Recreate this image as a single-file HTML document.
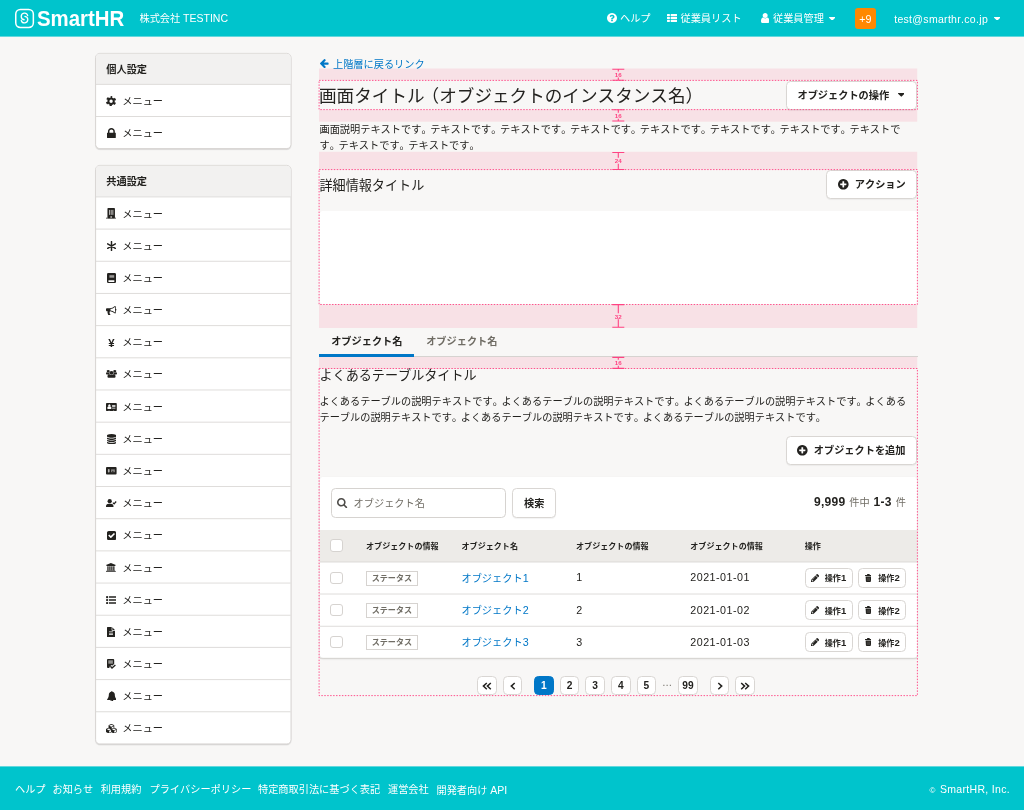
<!DOCTYPE html>
<html lang="ja"><head><meta charset="utf-8"><title>SmartHR</title><style>
*{box-sizing:border-box;margin:0;padding:0}
html,body{width:1024px;height:810px;overflow:hidden}
body{position:relative;background:#f8f7f6;color:#23221f;font-family:"Liberation Sans","Noto Sans CJK JP",sans-serif;font-size:10.2px}
*{font-kerning:none}
.pt{letter-spacing:-.14em}
.po{margin-left:-.17em}
.l{font-size:1.03em}
.n{letter-spacing:.045em;font-size:1.05em}
#root{position:absolute;left:0;top:0;width:1024px;height:810px;will-change:transform;filter:blur(.35px)}
div,nav,header,footer,svg.ic,.t{position:absolute}
a{text-decoration:none}
.hd{left:-12px;top:-12px;width:1048px;height:49px;background:linear-gradient(#00c4cc 48px,#63d8dd 48px)}
.hd>*{margin:12px 0 0 12px}
.ft>*{margin-left:12px}
.ft{left:-12px;top:766px;width:1048px;height:56px;background:linear-gradient(#63d8dd 1px,#00c4cc 1px)}
.t{white-space:nowrap}
.w{color:#fff}
.logo{color:#fff;font-weight:700;font-size:22.3px;letter-spacing:0;transform:scaleX(.915);transform-origin:0 50%}
.em .l{letter-spacing:.31px}
.badge{background:#ff8800;color:#fff;border-radius:3px;text-align:center;line-height:22.4px;font-size:10.2px}
.ov{position:absolute;left:0;top:0;width:1024px;height:810px;pointer-events:none}
.ov text{font-family:"Liberation Sans",sans-serif}
.lk{color:#0077c7}
.yen{font-size:11.4px;font-weight:700}
.h1{font-size:17.6px;font-weight:400}
.h2{font-size:13.1px;font-weight:400}
.b{font-weight:700}
.gr{color:#706d65}
.btn{background:#fff;border:1px solid #d9d6d3;border-radius:4.5px;box-shadow:0 1px 1px rgba(3,3,2,.05)}
.wh{background:#fff;border-radius:3px}
.tb{box-shadow:0 1px 2px rgba(3,3,2,.16)}
.inp{background:#fff;border:1px solid #d6d3d0;border-radius:4.5px}
.th{background:#edebe8}
.thx{font-size:8.07px;font-weight:700}
.cb{background:#fff;border:1px solid #d6d3d0;border-radius:3px}
.st{border:1px solid #d6d3d0;background:#fff;font-size:8.07px;font-weight:700;color:#706d65;text-align:center;line-height:13px}
.bs{font-size:8.07px;font-weight:700}
.bs .n{font-size:1.18em;letter-spacing:0}
.sm{box-shadow:none}
.num{font-weight:700}
.num .n{font-size:1.18em;letter-spacing:.025em}
.cnt{word-spacing:1px}
.cnt{font-size:10.2px}
.pg{background:#fff;border:1px solid #d9d6d3;border-radius:4.5px;text-align:center;line-height:18.6px;font-size:10.2px;font-weight:700;letter-spacing:0}
.pg.on{background:#0077c7;border-color:#0077c7;color:#fff}
.el{color:#706d65}
small{font-size:8px;letter-spacing:0;margin-right:1.6px}
.cp .l{letter-spacing:.33px}
</style></head><body><div id="root">
<header class="hd">
<svg class="ic" style="left:14px;top:7.5px;width:21px;height:21px" viewBox="0 0 21 21"><rect x="1.75" y="1.45" width="17.6" height="18" rx="4.6" fill="none" stroke="#fff" stroke-width="1.5"/><path d="M13.7 7.6A3.3 3.3 0 1 0 10.1 11.75M7.3 12.5A3.3 3.3 0 1 0 10.9 8.35" fill="none" stroke="#fff" stroke-width="1.3" stroke-linecap="round"/></svg>
<div class="t logo" style="left:37.1px;top:6.8px;height:24px;line-height:24px;">SmartHR</div>
<div class="t w" style="left:139.5px;top:7.2px;height:22px;line-height:22px;">株式会社 <span class="l">TESTINC</span></div>
<svg class="ic" style="left:606.70px;top:13.40px;width:10.00px;height:10.00px" viewBox="0 -1408 1536 1536" preserveAspectRatio="none"><path fill="#fff" transform="scale(1,-1)" d="M896 160v192q0 14 -9 23t-23 9h-192q-14 0 -23 -9t-9 -23v-192q0 -14 9 -23t23 -9h192q14 0 23 9t9 23zM1152 832q0 88 -55.5 163t-138.5 116t-170 41q-243 0 -371 -213q-15 -24 8 -42l132 -100q7 -6 19 -6q16 0 25 12q53 68 86 92q34 24 86 24q48 0 85.5 -26t37.5 -59 q0 -38 -20 -61t-68 -45q-63 -28 -115.5 -86.5t-52.5 -125.5v-36q0 -14 9 -23t23 -9h192q14 0 23 9t9 23q0 19 21.5 49.5t54.5 49.5q32 18 49 28.5t46 35t44.5 48t28 60.5t12.5 81zM1536 640q0 -209 -103 -385.5t-279.5 -279.5t-385.5 -103t-385.5 103t-279.5 279.5 t-103 385.5t103 385.5t279.5 279.5t385.5 103t385.5 -103t279.5 -279.5t103 -385.5z"/></svg>
<div class="t w" style="left:620px;top:8.4px;height:22px;line-height:22px;">ヘルプ</div>
<svg class="ic" style="left:666.90px;top:14.39px;width:10.20px;height:8.01px" viewBox="0 -1408 1792 1408" preserveAspectRatio="none"><path fill="#fff" transform="scale(1,-1)" d="M512 288v-192q0 -40 -28 -68t-68 -28h-320q-40 0 -68 28t-28 68v192q0 40 28 68t68 28h320q40 0 68 -28t28 -68zM512 800v-192q0 -40 -28 -68t-68 -28h-320q-40 0 -68 28t-28 68v192q0 40 28 68t68 28h320q40 0 68 -28t28 -68zM1792 288v-192q0 -40 -28 -68t-68 -28h-960 q-40 0 -68 28t-28 68v192q0 40 28 68t68 28h960q40 0 68 -28t28 -68zM512 1312v-192q0 -40 -28 -68t-68 -28h-320q-40 0 -68 28t-28 68v192q0 40 28 68t68 28h320q40 0 68 -28t28 -68zM1792 800v-192q0 -40 -28 -68t-68 -28h-960q-40 0 -68 28t-28 68v192q0 40 28 68t68 28 h960q40 0 68 -28t28 -68zM1792 1312v-192q0 -40 -28 -68t-68 -28h-960q-40 0 -68 28t-28 68v192q0 40 28 68t68 28h960q40 0 68 -28t28 -68z"/></svg>
<div class="t w" style="left:680.5px;top:8.4px;height:22px;line-height:22px;">従業員リスト</div>
<svg class="ic" style="left:760.53px;top:13.20px;width:8.33px;height:10.00px" viewBox="0 -1408 1280 1536" preserveAspectRatio="none"><path fill="#fff" transform="scale(1,-1)" d="M1280 137q0 -109 -62.5 -187t-150.5 -78h-854q-88 0 -150.5 78t-62.5 187q0 85 8.5 160.5t31.5 152t58.5 131t94 89t134.5 34.5q131 -128 313 -128t313 128q76 0 134.5 -34.5t94 -89t58.5 -131t31.5 -152t8.5 -160.5zM1024 1024q0 -159 -112.5 -271.5t-271.5 -112.5 t-271.5 112.5t-112.5 271.5t112.5 271.5t271.5 112.5t271.5 -112.5t112.5 -271.5z"/></svg>
<div class="t w" style="left:773px;top:8.4px;height:22px;line-height:22px;">従業員管理</div>
<svg class="ic" style="left:828.80px;top:16.60px;width:6.40px;height:3.60px" viewBox="0 -896 1024 576" preserveAspectRatio="none"><path fill="#fff" transform="scale(1,-1)" d="M1024 832q0 -26 -19 -45l-448 -448q-19 -19 -45 -19t-45 19l-448 448q-19 19 -19 45t19 45t45 19h896q26 0 45 -19t19 -45z"/></svg>
<div class="badge" style="left:854.6px;top:7.6px;width:21.9px;height:21.6px;"><span class="l">+</span><span class="n">9</span></div>
<div class="t w em" style="left:894.2px;top:8.4px;height:22px;line-height:22px;"><span class="l">test@smarthr.co.jp</span></div>
<svg class="ic" style="left:994.00px;top:16.60px;width:6.40px;height:3.60px" viewBox="0 -896 1024 576" preserveAspectRatio="none"><path fill="#fff" transform="scale(1,-1)" d="M1024 832q0 -26 -19 -45l-448 -448q-19 -19 -45 -19t-45 19l-448 448q-19 19 -19 45t19 45t45 19h896q26 0 45 -19t19 -45z"/></svg>
</header>
<svg class="ov" viewBox="0 0 1024 810"><rect x="95.6" y="54.5" width="195.4" height="95.15" rx="4.2" fill="#030302" fill-opacity=".09" stroke="#030302" stroke-opacity=".05" stroke-width="1.4"/><rect x="95.6" y="53.4" width="195.4" height="95.15" rx="4.2" fill="#fff" stroke="#d3d0cd" stroke-width=".85"/><path d="M96 84.0V57.6a3.8 3.8 0 0 1 3.8-3.8H286.8a3.8 3.8 0 0 1 3.8 3.8V84.0Z" fill="#f2f1f0"/><path d="M96 84.4H290.6" stroke="#d6d3d0" stroke-width=".8"/><path d="M96 116.5H290.6" stroke="#d6d3d0" stroke-width=".8"/><rect x="95.6" y="166.5" width="195.4" height="578.51" rx="4.2" fill="#030302" fill-opacity=".09" stroke="#030302" stroke-opacity=".05" stroke-width="1.4"/><rect x="95.6" y="165.4" width="195.4" height="578.51" rx="4.2" fill="#fff" stroke="#d3d0cd" stroke-width=".85"/><path d="M96 196.5V169.6a3.8 3.8 0 0 1 3.8-3.8H286.8a3.8 3.8 0 0 1 3.8 3.8V196.5Z" fill="#f2f1f0"/><path d="M96 196.9H290.6" stroke="#d6d3d0" stroke-width=".8"/><path d="M96 229.08H290.6" stroke="#d6d3d0" stroke-width=".8"/><path d="M96 261.26H290.6" stroke="#d6d3d0" stroke-width=".8"/><path d="M96 293.44H290.6" stroke="#d6d3d0" stroke-width=".8"/><path d="M96 325.62H290.6" stroke="#d6d3d0" stroke-width=".8"/><path d="M96 357.8H290.6" stroke="#d6d3d0" stroke-width=".8"/><path d="M96 389.98H290.6" stroke="#d6d3d0" stroke-width=".8"/><path d="M96 422.16H290.6" stroke="#d6d3d0" stroke-width=".8"/><path d="M96 454.34H290.6" stroke="#d6d3d0" stroke-width=".8"/><path d="M96 486.52H290.6" stroke="#d6d3d0" stroke-width=".8"/><path d="M96 518.7H290.6" stroke="#d6d3d0" stroke-width=".8"/><path d="M96 550.88H290.6" stroke="#d6d3d0" stroke-width=".8"/><path d="M96 583.06H290.6" stroke="#d6d3d0" stroke-width=".8"/><path d="M96 615.24H290.6" stroke="#d6d3d0" stroke-width=".8"/><path d="M96 647.42H290.6" stroke="#d6d3d0" stroke-width=".8"/><path d="M96 679.6H290.6" stroke="#d6d3d0" stroke-width=".8"/><path d="M96 711.78H290.6" stroke="#d6d3d0" stroke-width=".8"/><rect x="319" y="68.5" width="598.2" height="11.9" fill="#f8e1e6"/><rect x="319" y="109.6" width="598.2" height="12.1" fill="#f8e1e6"/><rect x="319" y="151.8" width="598.2" height="17.8" fill="#f8e1e6"/><rect x="319" y="304.5" width="598.2" height="23.5" fill="#f8e1e6"/><rect x="319" y="356.7" width="598.2" height="11.8" fill="#f8e1e6"/></svg>
<div class="t b" style="left:106.3px;top:53.6px;height:31.4px;line-height:31.4px;">個人設定</div><svg class="ic" style="left:106.25px;top:95.75px;width:10.2px;height:10.4px" viewBox="0 0 10.2 10.4"><circle cx="5.1" cy="5.2" r="2.700" fill="none" stroke="#23221f" stroke-width="2"/><circle cx="5.1" cy="5.2" r="4.200" fill="none" stroke="#23221f" stroke-width="1.900" stroke-dasharray="2.200 2.198" stroke-dashoffset="1.100" transform="rotate(-90 5.1 5.2)"/></svg><div class="t " style="left:122.3px;top:91.05px;height:22px;line-height:22px;">メニュー</div><svg class="ic" style="left:106.95px;top:127.95px;width:8.80px;height:10.20px" viewBox="0 -1408 1152 1408" preserveAspectRatio="none"><path fill="#23221f" transform="scale(1,-1)" d="M320 768h512v192q0 106 -75 181t-181 75t-181 -75t-75 -181v-192zM1152 672v-576q0 -40 -28 -68t-68 -28h-960q-40 0 -68 28t-28 68v576q0 40 28 68t68 28h32v192q0 184 132 316t316 132t316 -132t132 -316v-192h32q40 0 68 -28t28 -68z"/></svg><div class="t " style="left:122.3px;top:123.15px;height:22px;line-height:22px;">メニュー</div>
<div class="t b" style="left:106.3px;top:165.6px;height:31.9px;line-height:31.9px;">共通設定</div><svg class="ic" style="left:106.20px;top:208.24px;width:10.3px;height:10.5px" viewBox="0 0 10.3 10.5"><rect x="1.45" y="0" width="7.500" height="10.200" rx=".8" fill="#23221f"/><path d="M3.550 1.900V6.900M5.200 1.900V6.900M6.850 1.900V6.900" stroke="#c4c3c1" stroke-width=".95" fill="none"/><rect x="4.350" y="8.300" width="1.700" height="1.700" fill="#c4c3c1"/><rect x="0" y="9.750" width="10.300" height=".75" fill="#23221f"/></svg><div class="t " style="left:122.3px;top:203.59px;height:22px;line-height:22px;">メニュー</div><svg class="ic" style="left:106.85px;top:240.57px;width:9px;height:10.2px" viewBox="0 0 9 10.2"><path d="M4.5 .6V9.6M.65 2.85L8.35 7.35M8.35 2.85L.65 7.35" stroke="#23221f" stroke-width="1.45" stroke-linecap="round" fill="none"/></svg><div class="t " style="left:122.3px;top:235.77px;height:22px;line-height:22px;">メニュー</div><svg class="ic" style="left:106.80px;top:272.85px;width:9.1px;height:10px" viewBox="0 0 9.1 10"><rect x="0" y="0" width="9.1" height="10" rx="1.3" fill="#23221f"/><rect x="2.4" y="2.2" width="4.8" height="2.5" fill="#9a9997"/><rect x="1.4" y="7.2" width="6" height="1.7" rx=".4" fill="#fff"/></svg><div class="t " style="left:122.3px;top:267.95px;height:22px;line-height:22px;">メニュー</div><svg class="ic" style="left:106.10px;top:305.54px;width:10.50px;height:8.98px" viewBox="0 -1408 1792 1533" preserveAspectRatio="none"><path fill="#23221f" transform="scale(1,-1)" d="M1664 896q53 0 90.5 -37.5t37.5 -90.5t-37.5 -90.5t-90.5 -37.5v-384q0 -52 -38 -90t-90 -38q-417 347 -812 380q-58 -19 -91 -66t-31 -100.5t40 -92.5q-20 -33 -23 -65.5t6 -58t33.5 -55t48 -50t61.5 -50.5q-29 -58 -111.5 -83t-168.5 -11.5t-132 55.5q-7 23 -29.5 87.5 t-32 94.5t-23 89t-15 101t3.5 98.5t22 110.5h-122q-66 0 -113 47t-47 113v192q0 66 47 113t113 47h480q435 0 896 384q52 0 90 -38t38 -90v-384zM1536 292v954q-394 -302 -768 -343v-270q377 -42 768 -341z"/></svg><div class="t " style="left:122.3px;top:300.13px;height:22px;line-height:22px;">メニュー</div><div class="t yen" style="left:105.35px;top:332.51px;height:20px;line-height:20px;width:12px;text-align:center">¥</div><div class="t " style="left:122.3px;top:332.31px;height:22px;line-height:22px;">メニュー</div><svg class="ic" style="left:105.85px;top:370.49px;width:11.00px;height:7.80px" viewBox="0 -1536 1920 1792" preserveAspectRatio="none"><path fill="#23221f" transform="scale(1,-1)" d="M593 640q-162 -5 -265 -128h-134q-82 0 -138 40.5t-56 118.5q0 353 124 353q6 0 43.5 -21t97.5 -42.5t119 -21.5q67 0 133 23q-5 -37 -5 -66q0 -139 81 -256zM1664 3q0 -120 -73 -189.5t-194 -69.5h-874q-121 0 -194 69.5t-73 189.5q0 53 3.5 103.5t14 109t26.5 108.5 t43 97.5t62 81t85.5 53.5t111.5 20q10 0 43 -21.5t73 -48t107 -48t135 -21.5t135 21.5t107 48t73 48t43 21.5q61 0 111.5 -20t85.5 -53.5t62 -81t43 -97.5t26.5 -108.5t14 -109t3.5 -103.5zM640 1280q0 -106 -75 -181t-181 -75t-181 75t-75 181t75 181t181 75t181 -75 t75 -181zM1344 896q0 -159 -112.5 -271.5t-271.5 -112.5t-271.5 112.5t-112.5 271.5t112.5 271.5t271.5 112.5t271.5 -112.5t112.5 -271.5zM1920 671q0 -78 -56 -118.5t-138 -40.5h-134q-103 123 -265 128q81 117 81 256q0 29 -5 66q66 -23 133 -23q59 0 119 21.5t97.5 42.5 t43.5 21q124 0 124 -353zM1792 1280q0 -106 -75 -181t-181 -75t-181 75t-75 181t75 181t181 75t181 -75t75 -181z"/></svg><div class="t " style="left:122.3px;top:364.49px;height:22px;line-height:22px;">メニュー</div><svg class="ic" style="left:105.95px;top:402.52px;width:10.80px;height:8.10px" viewBox="0 -1408 2048 1536" preserveAspectRatio="none"><path fill="#23221f" transform="scale(1,-1)" d="M1024 405q0 64 -9 117.5t-29.5 103t-60.5 78t-97 28.5q-6 -4 -30 -18t-37.5 -21.5t-35.5 -17.5t-43 -14.5t-42 -4.5t-42 4.5t-43 14.5t-35.5 17.5t-37.5 21.5t-30 18q-57 0 -97 -28.5t-60.5 -78t-29.5 -103t-9 -117.5t37 -106.5t91 -42.5h512q54 0 91 42.5t37 106.5z M867 925q0 94 -66.5 160.5t-160.5 66.5t-160.5 -66.5t-66.5 -160.5t66.5 -160.5t160.5 -66.5t160.5 66.5t66.5 160.5zM1792 416v64q0 14 -9 23t-23 9h-576q-14 0 -23 -9t-9 -23v-64q0 -14 9 -23t23 -9h576q14 0 23 9t9 23zM1792 676v56q0 15 -10.5 25.5t-25.5 10.5h-568 q-15 0 -25.5 -10.5t-10.5 -25.5v-56q0 -15 10.5 -25.5t25.5 -10.5h568q15 0 25.5 10.5t10.5 25.5zM1792 928v64q0 14 -9 23t-23 9h-576q-14 0 -23 -9t-9 -23v-64q0 -14 9 -23t23 -9h576q14 0 23 9t9 23zM2048 1248v-1216q0 -66 -47 -113t-113 -47h-352v96q0 14 -9 23t-23 9 h-64q-14 0 -23 -9t-9 -23v-96h-768v96q0 14 -9 23t-23 9h-64q-14 0 -23 -9t-9 -23v-96h-352q-66 0 -113 47t-47 113v1216q0 66 47 113t113 47h1728q66 0 113 -47t47 -113z"/></svg><div class="t " style="left:122.3px;top:396.67px;height:22px;line-height:22px;">メニュー</div><svg class="ic" style="left:106.75px;top:433.60px;width:9.20px;height:10.30px" viewBox="0 -1536 1536 1792" preserveAspectRatio="none"><path fill="#23221f" transform="scale(1,-1)" d="M768 768q237 0 443 43t325 127v-170q0 -69 -103 -128t-280 -93.5t-385 -34.5t-385 34.5t-280 93.5t-103 128v170q119 -84 325 -127t443 -43zM768 0q237 0 443 43t325 127v-170q0 -69 -103 -128t-280 -93.5t-385 -34.5t-385 34.5t-280 93.5t-103 128v170q119 -84 325 -127 t443 -43zM768 384q237 0 443 43t325 127v-170q0 -69 -103 -128t-280 -93.5t-385 -34.5t-385 34.5t-280 93.5t-103 128v170q119 -84 325 -127t443 -43zM768 1536q208 0 385 -34.5t280 -93.5t103 -128v-128q0 -69 -103 -128t-280 -93.5t-385 -34.5t-385 34.5t-280 93.5 t-103 128v128q0 69 103 128t280 93.5t385 34.5z"/></svg><div class="t " style="left:122.3px;top:428.85px;height:22px;line-height:22px;">メニュー</div><svg class="ic" style="left:106.05px;top:467.23px;width:10.6px;height:7.4px" viewBox="0 0 10.6 7.4"><rect x="0" y="0" width="10.6" height="7.4" rx=".9" fill="#23221f"/><rect x="1.9" y="2" width="1.7" height="3.5" rx=".7" fill="#b5b4b2"/><rect x="5.1" y="2.4" width="3.7" height="2.8" fill="#8d8c8a"/><rect x="6.3" y="3.8" width="1.1" height="1.4" fill="#23221f"/></svg><div class="t " style="left:122.3px;top:461.03px;height:22px;line-height:22px;">メニュー</div><svg class="ic" style="left:106.05px;top:498.81px;width:10.6px;height:8.6px" viewBox="0 0 10.6 8.6"><circle cx="3.7" cy="2.15" r="2.15" fill="#23221f"/><path d="M0 8.6V7.5A2.7 2.7 0 0 1 2.7 4.8H4.8A2.7 2.7 0 0 1 7.500 7.500V8.600Z" fill="#23221f"/><path d="M6.900 3.700L8.100 4.900L10.200 2.500" stroke="#23221f" stroke-width="1.2" fill="none"/></svg><div class="t " style="left:122.3px;top:493.21px;height:22px;line-height:22px;">メニュー</div><svg class="ic" style="left:106.75px;top:530.69px;width:9.20px;height:9.20px" viewBox="0 -1408 1536 1536" preserveAspectRatio="none"><path fill="#23221f" transform="scale(1,-1)" d="M685 237l614 614q19 19 19 45t-19 45l-102 102q-19 19 -45 19t-45 -19l-467 -467l-211 211q-19 19 -45 19t-45 -19l-102 -102q-19 -19 -19 -45t19 -45l358 -358q19 -19 45 -19t45 19zM1536 1120v-960q0 -119 -84.5 -203.5t-203.5 -84.5h-960q-119 0 -203.5 84.5 t-84.5 203.5v960q0 119 84.5 203.5t203.5 84.5h960q119 0 203.5 -84.5t84.5 -203.5z"/></svg><div class="t " style="left:122.3px;top:525.39px;height:22px;line-height:22px;">メニュー</div><svg class="ic" style="left:106.45px;top:562.90px;width:9.80px;height:9.15px" viewBox="0 -1536 1920 1792" preserveAspectRatio="none"><path fill="#23221f" transform="scale(1,-1)" d="M960 1536l960 -384v-128h-128q0 -26 -20.5 -45t-48.5 -19h-1526q-28 0 -48.5 19t-20.5 45h-128v128zM256 896h256v-768h128v768h256v-768h128v768h256v-768h128v768h256v-768h59q28 0 48.5 -19t20.5 -45v-64h-1664v64q0 26 20.5 45t48.5 19h59v768zM1851 -64 q28 0 48.5 -19t20.5 -45v-128h-1920v128q0 26 20.5 45t48.5 19h1782z"/></svg><div class="t " style="left:122.3px;top:557.57px;height:22px;line-height:22px;">メニュー</div><svg class="ic" style="left:106.20px;top:595.60px;width:10.30px;height:8.09px" viewBox="0 -1344 1792 1408" preserveAspectRatio="none"><path fill="#23221f" transform="scale(1,-1)" d="M384 128q0 -80 -56 -136t-136 -56t-136 56t-56 136t56 136t136 56t136 -56t56 -136zM384 640q0 -80 -56 -136t-136 -56t-136 56t-56 136t56 136t136 56t136 -56t56 -136zM1792 224v-192q0 -13 -9.5 -22.5t-22.5 -9.5h-1216q-13 0 -22.5 9.5t-9.5 22.5v192q0 13 9.5 22.5 t22.5 9.5h1216q13 0 22.5 -9.5t9.5 -22.5zM384 1152q0 -80 -56 -136t-136 -56t-136 56t-56 136t56 136t136 56t136 -56t56 -136zM1792 736v-192q0 -13 -9.5 -22.5t-22.5 -9.5h-1216q-13 0 -22.5 9.5t-9.5 22.5v192q0 13 9.5 22.5t22.5 9.5h1216q13 0 22.5 -9.5t9.5 -22.5z M1792 1248v-192q0 -13 -9.5 -22.5t-22.5 -9.5h-1216q-13 0 -22.5 9.5t-9.5 22.5v192q0 13 9.5 22.5t22.5 9.5h1216q13 0 22.5 -9.5t9.5 -22.5z"/></svg><div class="t " style="left:122.3px;top:589.75px;height:22px;line-height:22px;">メニュー</div><svg class="ic" style="left:107.35px;top:626.68px;width:8.00px;height:10.30px" viewBox="0 -1536 1536 1792" preserveAspectRatio="none"><path fill="#23221f" transform="scale(1,-1)" d="M1468 1060q14 -14 28 -36h-472v472q22 -14 36 -28zM992 896h544v-1056q0 -40 -28 -68t-68 -28h-1344q-40 0 -68 28t-28 68v1600q0 40 28 68t68 28h800v-544q0 -40 28 -68t68 -28zM1152 160v64q0 14 -9 23t-23 9h-704q-14 0 -23 -9t-9 -23v-64q0 -14 9 -23t23 -9h704 q14 0 23 9t9 23zM1152 416v64q0 14 -9 23t-23 9h-704q-14 0 -23 -9t-9 -23v-64q0 -14 9 -23t23 -9h704q14 0 23 9t9 23zM1152 672v64q0 14 -9 23t-23 9h-704q-14 0 -23 -9t-9 -23v-64q0 -14 9 -23t23 -9h704q14 0 23 9t9 23z"/></svg><div class="t " style="left:122.3px;top:621.93px;height:22px;line-height:22px;">メニュー</div><svg class="ic" style="left:106.90px;top:659.11px;width:8.9px;height:9.8px" viewBox="0 0 8.9 9.8"><rect x="0" y="0" width="7.2" height="8.900" rx=".9" fill="#23221f"/><rect x="1.3" y="1.3" width="4.6" height="3.400" fill="#8f8e8c"/><path d="M3.300 7.200L5 9L8.500 5.900" stroke="#fff" stroke-width="3.200" fill="none"/><path d="M3.400 7.300L5 9L8.400 6" stroke="#23221f" stroke-width="1.400" fill="none"/></svg><div class="t " style="left:122.3px;top:654.11px;height:22px;line-height:22px;">メニュー</div><svg class="ic" style="left:106.52px;top:690.99px;width:9.66px;height:10.40px" viewBox="64 -1536 1664 1792" preserveAspectRatio="none"><path fill="#23221f" transform="scale(1,-1)" d="M912 -160q0 16 -16 16q-59 0 -101.5 42.5t-42.5 101.5q0 16 -16 16t-16 -16q0 -73 51.5 -124.5t124.5 -51.5q16 0 16 16zM1728 128q0 -52 -38 -90t-90 -38h-448q0 -106 -75 -181t-181 -75t-181 75t-75 181h-448q-52 0 -90 38t-38 90q50 42 91 88t85 119.5t74.5 158.5 t50 206t19.5 260q0 152 117 282.5t307 158.5q-8 19 -8 39q0 40 28 68t68 28t68 -28t28 -68q0 -20 -8 -39q190 -28 307 -158.5t117 -282.5q0 -139 19.5 -260t50 -206t74.5 -158.5t85 -119.5t91 -88z"/></svg><div class="t " style="left:122.3px;top:686.29px;height:22px;line-height:22px;">メニュー</div><svg class="ic" style="left:105.95px;top:723.62px;width:10.80px;height:9.50px" viewBox="0 -1536 2176 1792" preserveAspectRatio="none"><path fill="#23221f" transform="scale(1,-1)" d="M640 -96l384 192v314l-384 -164v-342zM576 358l404 173l-404 173l-404 -173zM1664 -96l384 192v314l-384 -164v-342zM1600 358l404 173l-404 173l-404 -173zM1152 651l384 165v266l-384 -164v-267zM1088 1030l441 189l-441 189l-441 -189zM2176 512v-416q0 -36 -19 -67 t-52 -47l-448 -224q-25 -14 -57 -14t-57 14l-448 224q-4 2 -7 4q-2 -2 -7 -4l-448 -224q-25 -14 -57 -14t-57 14l-448 224q-33 16 -52 47t-19 67v416q0 38 21.5 70t56.5 48l434 186v400q0 38 21.5 70t56.5 48l448 192q23 10 50 10t50 -10l448 -192q35 -16 56.5 -48t21.5 -70 v-400l434 -186q36 -16 57 -48t21 -70z"/></svg><div class="t " style="left:122.3px;top:718.47px;height:22px;line-height:22px;">メニュー</div>
<svg class="ic" style="left:320.10px;top:59.05px;width:8.60px;height:9.10px" viewBox="64 -1355 1472 1558" preserveAspectRatio="none"><path fill="#0077c7" transform="scale(1,-1)" d="M1536 640v-128q0 -53 -32.5 -90.5t-84.5 -37.5h-704l293 -294q38 -36 38 -90t-38 -90l-75 -76q-37 -37 -90 -37q-52 0 -91 37l-651 652q-37 37 -37 90q0 52 37 91l651 650q38 38 91 38q52 0 90 -38l75 -74q38 -38 38 -91t-38 -91l-293 -293h704q52 0 84.5 -37.5 t32.5 -90.5z"/></svg>
<a class="t lk" style="left:333px;top:54.0px;height:22px;line-height:22px;">上階層に戻るリンク</a>
<h1 class="t h1" style="left:319px;top:82.0px;height:29px;line-height:29px;">画面タイトル<span class="po">（</span>オブジェクトのインスタンス名）</h1>
<div class="btn" style="left:786px;top:81px;width:131.2px;height:28.8px;"></div>
<div class="t b" style="left:797.5px;top:81.8px;height:28.7px;line-height:28.7px;">オブジェクトの操作</div>
<svg class="ic" style="left:897.60px;top:93.44px;width:6.60px;height:3.71px" viewBox="0 -896 1024 576" preserveAspectRatio="none"><path fill="#23221f" transform="scale(1,-1)" d="M1024 832q0 -26 -19 -45l-448 -448q-19 -19 -45 -19t-45 19l-448 448q-19 19 -19 45t19 45t45 19h896q26 0 45 -19t19 -45z"/></svg>
<p class="t p" style="left:319.5px;top:122.25px;height:15.4px;line-height:15.4px;height:auto">画面説明テキストです<span class="pt">。</span>テキストです<span class="pt">。</span>テキストです<span class="pt">。</span>テキストです<span class="pt">。</span>テキストです<span class="pt">。</span>テキストです<span class="pt">。</span>テキストです<span class="pt">。</span>テキストで<br>す<span class="pt">。</span>テキストです<span class="pt">。</span>テキストです<span class="pt">。</span></p>
<h2 class="t h2" style="left:319.5px;top:171.0px;height:29px;line-height:29px;">詳細情報タイトル</h2>
<div class="btn" style="left:826.4px;top:170px;width:90.8px;height:28.9px;"></div>
<svg class="ic" style="left:838.10px;top:179.10px;width:10.60px;height:10.60px" viewBox="0 -1408 1536 1536" preserveAspectRatio="none"><path fill="#23221f" transform="scale(1,-1)" d="M1216 576v128q0 26 -19 45t-45 19h-256v256q0 26 -19 45t-45 19h-128q-26 0 -45 -19t-19 -45v-256h-256q-26 0 -45 -19t-19 -45v-128q0 -26 19 -45t45 -19h256v-256q0 -26 19 -45t45 -19h128q26 0 45 19t19 45v256h256q26 0 45 19t19 45zM1536 640q0 -209 -103 -385.5 t-279.5 -279.5t-385.5 -103t-385.5 103t-279.5 279.5t-103 385.5t103 385.5t279.5 279.5t385.5 103t385.5 -103t279.5 -279.5t103 -385.5z"/></svg>
<div class="t b" style="left:854.8px;top:171.0px;height:28.7px;line-height:28.7px;">アクション</div>
<div class="wh" style="left:320px;top:210.5px;width:597px;height:93.5px;"></div>
<div class="" style="left:319px;top:355.7px;width:598.5px;height:1px;background:#d6d3d0"></div>
<div class="" style="left:319px;top:353.8px;width:95px;height:3px;background:#0077c7"></div>
<div class="t b" style="left:331.2px;top:329.0px;height:26px;line-height:26px;">オブジェクト名</div>
<div class="t b gr" style="left:426.2px;top:329.0px;height:26px;line-height:26px;">オブジェクト名</div>
<h2 class="t h2" style="left:319.5px;top:366.0px;height:20px;line-height:20px;">よくあるテーブルタイトル</h2>
<p class="t p" style="left:319.5px;top:394.4px;height:15.7px;line-height:15.7px;height:auto">よくあるテーブルの説明テキストです<span class="pt">。</span>よくあるテーブルの説明テキストです<span class="pt">。</span>よくあるテーブルの説明テキストです<span class="pt">。</span>よくある<br>テーブルの説明テキストです<span class="pt">。</span>よくあるテーブルの説明テキストです<span class="pt">。</span>よくあるテーブルの説明テキストです<span class="pt">。</span></p>
<div class="btn" style="left:786px;top:436px;width:131.2px;height:29.2px;"></div>
<svg class="ic" style="left:797.10px;top:445.40px;width:10.60px;height:10.60px" viewBox="0 -1408 1536 1536" preserveAspectRatio="none"><path fill="#23221f" transform="scale(1,-1)" d="M1216 576v128q0 26 -19 45t-45 19h-256v256q0 26 -19 45t-45 19h-128q-26 0 -45 -19t-19 -45v-256h-256q-26 0 -45 -19t-19 -45v-128q0 -26 19 -45t45 -19h256v-256q0 -26 19 -45t45 -19h128q26 0 45 19t19 45v256h256q26 0 45 19t19 45zM1536 640q0 -209 -103 -385.5 t-279.5 -279.5t-385.5 -103t-385.5 103t-279.5 279.5t-103 385.5t103 385.5t279.5 279.5t385.5 103t385.5 -103t279.5 -279.5t103 -385.5z"/></svg>
<div class="t b" style="left:813.8px;top:437.3px;height:28.7px;line-height:28.7px;">オブジェクトを追加</div>
<div class="wh tb" style="left:320px;top:477px;width:597px;height:181px;"></div>
<div class="inp" style="left:330.6px;top:488px;width:175.8px;height:30px;"></div>
<svg class="ic" style="left:337.40px;top:497.90px;width:10.20px;height:10.20px" viewBox="0 -1408 1664 1664" preserveAspectRatio="none"><path fill="#4e4c49" transform="scale(1,-1)" d="M1152 704q0 185 -131.5 316.5t-316.5 131.5t-316.5 -131.5t-131.5 -316.5t131.5 -316.5t316.5 -131.5t316.5 131.5t131.5 316.5zM1664 -128q0 -52 -38 -90t-90 -38q-54 0 -90 38l-343 342q-179 -124 -399 -124q-143 0 -273.5 55.5t-225 150t-150 225t-55.5 273.5 t55.5 273.5t150 225t225 150t273.5 55.5t273.5 -55.5t225 -150t150 -225t55.5 -273.5q0 -220 -124 -399l343 -343q37 -37 37 -90z"/></svg>
<div class="t gr" style="left:353.6px;top:489.2px;height:29.2px;line-height:29.2px;">オブジェクト名</div>
<div class="btn" style="left:512.4px;top:488px;width:43.6px;height:30px;"></div>
<div class="t b" style="left:512.5px;top:489.2px;height:29.2px;line-height:29.2px;width:43.3px;text-align:center">検索</div>
<div class="t cnt" style="left:700px;top:492.3px;height:21px;line-height:21px;width:205.9px;text-align:right"><b class="num"><span class="n">9,999</span></b> <span class="gr">件中</span> <b class="num"><span class="n">1-3</span></b> <span class="gr">件</span></div>
<div class="th" style="left:320px;top:530px;width:597px;height:32px;"></div>
<div class="cb" style="left:330.4px;top:539.3px;width:12.5px;height:12.5px;"></div>
<div class="t thx" style="left:366.0px;top:531.3px;height:32px;line-height:32px;">オブジェクトの情報</div>
<div class="t thx" style="left:461.5px;top:531.3px;height:32px;line-height:32px;">オブジェクト名</div>
<div class="t thx" style="left:576.0px;top:531.3px;height:32px;line-height:32px;">オブジェクトの情報</div>
<div class="t thx" style="left:690.3px;top:531.3px;height:32px;line-height:32px;">オブジェクトの情報</div>
<div class="t thx" style="left:804.8px;top:531.3px;height:32px;line-height:32px;">操作</div>
<div class="cb" style="left:330.4px;top:571.5px;width:12.5px;height:12.5px;"></div>
<div class="st" style="left:365.8px;top:570.9px;width:52.2px;height:15px;">ステータス</div>
<a class="t lk" style="left:461.5px;top:566.8px;height:22px;line-height:22px;">オブジェクト<span class="n">1</span></a>
<div class="t num2" style="left:576.3px;top:566.3px;height:22px;line-height:22px;"><span class="n">1</span></div>
<div class="t num2" style="left:690.3px;top:566.3px;height:22px;line-height:22px;"><span class="n">2021-01-01</span></div>
<div class="btn sm" style="left:805px;top:568.0px;width:48px;height:20px;"></div>
<svg class="ic" style="left:810.80px;top:573.80px;width:8.20px;height:8.20px" viewBox="0 -1387 1515 1515" preserveAspectRatio="none"><path fill="#23221f" transform="scale(1,-1)" d="M363 0l91 91l-235 235l-91 -91v-107h128v-128h107zM886 928q0 22 -22 22q-10 0 -17 -7l-542 -542q-7 -7 -7 -17q0 -22 22 -22q10 0 17 7l542 542q7 7 7 17zM832 1120l416 -416l-832 -832h-416v416zM1515 1024q0 -53 -37 -90l-166 -166l-416 416l166 165q36 38 90 38 q53 0 91 -38l235 -234q37 -39 37 -91z"/></svg>
<div class="t bs" style="left:824.8px;top:568.4px;height:19.8px;line-height:19.8px;">操作<span class="n">1</span></div>
<div class="btn sm" style="left:858px;top:568.0px;width:48px;height:20px;"></div>
<svg class="ic" style="left:864.60px;top:573.90px;width:6.8px;height:8px" viewBox="0 0 6.8 8"><rect x="0" y=".9" width="6.800" height="1.100" rx=".3" fill="#23221f"/><rect x="2.100" y="0" width="2.600" height="1.200" rx=".3" fill="#23221f"/><path d="M.6 2.600H6.200L5.900 7.300A.8 .8 0 0 1 5.100 8H1.700A.8 .8 0 0 1 .9 7.300Z" fill="#23221f"/><path d="M2.300 3.600V7M3.400 3.600V7M4.500 3.600V7" stroke="#6b6a68" stroke-width=".45" fill="none"/></svg>
<div class="t bs" style="left:878.3px;top:568.4px;height:19.8px;line-height:19.8px;">操作<span class="n">2</span></div>
<div class="cb" style="left:330.4px;top:603.7px;width:12.5px;height:12.5px;"></div>
<div class="st" style="left:365.8px;top:603.1px;width:52.2px;height:15px;">ステータス</div>
<a class="t lk" style="left:461.5px;top:599.0px;height:22px;line-height:22px;">オブジェクト<span class="n">2</span></a>
<div class="t num2" style="left:576.3px;top:598.5px;height:22px;line-height:22px;"><span class="n">2</span></div>
<div class="t num2" style="left:690.3px;top:598.5px;height:22px;line-height:22px;"><span class="n">2021-01-02</span></div>
<div class="btn sm" style="left:805px;top:600.2px;width:48px;height:20px;"></div>
<svg class="ic" style="left:810.80px;top:606.00px;width:8.20px;height:8.20px" viewBox="0 -1387 1515 1515" preserveAspectRatio="none"><path fill="#23221f" transform="scale(1,-1)" d="M363 0l91 91l-235 235l-91 -91v-107h128v-128h107zM886 928q0 22 -22 22q-10 0 -17 -7l-542 -542q-7 -7 -7 -17q0 -22 22 -22q10 0 17 7l542 542q7 7 7 17zM832 1120l416 -416l-832 -832h-416v416zM1515 1024q0 -53 -37 -90l-166 -166l-416 416l166 165q36 38 90 38 q53 0 91 -38l235 -234q37 -39 37 -91z"/></svg>
<div class="t bs" style="left:824.8px;top:600.6px;height:19.8px;line-height:19.8px;">操作<span class="n">1</span></div>
<div class="btn sm" style="left:858px;top:600.2px;width:48px;height:20px;"></div>
<svg class="ic" style="left:864.60px;top:606.10px;width:6.8px;height:8px" viewBox="0 0 6.8 8"><rect x="0" y=".9" width="6.800" height="1.100" rx=".3" fill="#23221f"/><rect x="2.100" y="0" width="2.600" height="1.200" rx=".3" fill="#23221f"/><path d="M.6 2.600H6.200L5.900 7.300A.8 .8 0 0 1 5.100 8H1.700A.8 .8 0 0 1 .9 7.300Z" fill="#23221f"/><path d="M2.300 3.600V7M3.400 3.600V7M4.500 3.600V7" stroke="#6b6a68" stroke-width=".45" fill="none"/></svg>
<div class="t bs" style="left:878.3px;top:600.6px;height:19.8px;line-height:19.8px;">操作<span class="n">2</span></div>
<div class="cb" style="left:330.4px;top:635.9px;width:12.5px;height:12.5px;"></div>
<div class="st" style="left:365.8px;top:635.3px;width:52.2px;height:15px;">ステータス</div>
<a class="t lk" style="left:461.5px;top:631.2px;height:22px;line-height:22px;">オブジェクト<span class="n">3</span></a>
<div class="t num2" style="left:576.3px;top:630.7px;height:22px;line-height:22px;"><span class="n">3</span></div>
<div class="t num2" style="left:690.3px;top:630.7px;height:22px;line-height:22px;"><span class="n">2021-01-03</span></div>
<div class="btn sm" style="left:805px;top:632.4px;width:48px;height:20px;"></div>
<svg class="ic" style="left:810.80px;top:638.20px;width:8.20px;height:8.20px" viewBox="0 -1387 1515 1515" preserveAspectRatio="none"><path fill="#23221f" transform="scale(1,-1)" d="M363 0l91 91l-235 235l-91 -91v-107h128v-128h107zM886 928q0 22 -22 22q-10 0 -17 -7l-542 -542q-7 -7 -7 -17q0 -22 22 -22q10 0 17 7l542 542q7 7 7 17zM832 1120l416 -416l-832 -832h-416v416zM1515 1024q0 -53 -37 -90l-166 -166l-416 416l166 165q36 38 90 38 q53 0 91 -38l235 -234q37 -39 37 -91z"/></svg>
<div class="t bs" style="left:824.8px;top:632.8px;height:19.8px;line-height:19.8px;">操作<span class="n">1</span></div>
<div class="btn sm" style="left:858px;top:632.4px;width:48px;height:20px;"></div>
<svg class="ic" style="left:864.60px;top:638.30px;width:6.8px;height:8px" viewBox="0 0 6.8 8"><rect x="0" y=".9" width="6.800" height="1.100" rx=".3" fill="#23221f"/><rect x="2.100" y="0" width="2.600" height="1.200" rx=".3" fill="#23221f"/><path d="M.6 2.600H6.200L5.900 7.300A.8 .8 0 0 1 5.100 8H1.700A.8 .8 0 0 1 .9 7.300Z" fill="#23221f"/><path d="M2.300 3.600V7M3.400 3.600V7M4.500 3.600V7" stroke="#6b6a68" stroke-width=".45" fill="none"/></svg>
<div class="t bs" style="left:878.3px;top:632.8px;height:19.8px;line-height:19.8px;">操作<span class="n">2</span></div>
<div class="pg" style="left:477.2px;top:675.6px;width:19.7px;height:19.7px;"><svg style="position:absolute;left:0;top:0;width:18px;height:18px" viewBox="-9 -9.1 18 18"><path d="M-0.19999999999999996 -3.1L-3.5999999999999996 0L-0.19999999999999996 3.1M3.8 -3.1L0.40000000000000013 0L3.8 3.1" fill="none" stroke="#23221f" stroke-width="1.5"/></svg></div>
<div class="pg" style="left:502.8px;top:675.6px;width:19.7px;height:19.7px;"><svg style="position:absolute;left:0;top:0;width:18px;height:18px" viewBox="-9 -9.1 18 18"><path d="M1.7 -3.1L-1.7 0L1.7 3.1" fill="none" stroke="#23221f" stroke-width="1.5"/></svg></div>
<div class="pg on" style="left:534.1px;top:675.6px;width:19.7px;height:19.7px;">1</div>
<div class="pg" style="left:559.7px;top:675.6px;width:19.7px;height:19.7px;">2</div>
<div class="pg" style="left:585.3px;top:675.6px;width:19.7px;height:19.7px;">3</div>
<div class="pg" style="left:611.1px;top:675.6px;width:19.7px;height:19.7px;">4</div>
<div class="pg" style="left:636.6px;top:675.6px;width:19.7px;height:19.7px;">5</div>
<div class="t el" style="left:656.3px;top:673.0px;height:19.7px;line-height:19.7px;width:21.7px;text-align:center">…</div>
<div class="pg" style="left:678.1px;top:675.6px;width:19.7px;height:19.7px;">99</div>
<div class="pg" style="left:709.7px;top:675.6px;width:19.7px;height:19.7px;"><svg style="position:absolute;left:0;top:0;width:18px;height:18px" viewBox="-9 -9.1 18 18"><path d="M-1.7 -3.1L1.7 0L-1.7 3.1" fill="none" stroke="#23221f" stroke-width="1.5"/></svg></div>
<div class="pg" style="left:735.1px;top:675.6px;width:19.7px;height:19.7px;"><svg style="position:absolute;left:0;top:0;width:18px;height:18px" viewBox="-9 -9.1 18 18"><path d="M-3.8 -3.1L-0.40000000000000013 0L-3.8 3.1M0.19999999999999996 -3.1L3.5999999999999996 0L0.19999999999999996 3.1" fill="none" stroke="#23221f" stroke-width="1.5"/></svg></div>
<svg class="ov" viewBox="0 0 1024 810"><path d="M612.3 69.2H624.3M612.3 80.3H624.3M618.3 69.2V71.55M618.3 77.55V80.3" stroke="#ff4383" stroke-width="1.1" fill="none"/><text x="618.3" y="76.75" text-anchor="middle" font-size="6.2" font-weight="700" fill="#ff4383" style="letter-spacing:0">16</text><rect x="319.1" y="80.4" width="598.3" height="29.2" fill="none" stroke="#ff4383" stroke-width="1" stroke-dasharray="1.47 1.47" stroke-opacity=".9"/><path d="M612.3 109.7H624.3M612.3 121.0H624.3M618.3 109.7V112.75M618.3 118.75V121.0" stroke="#ff4383" stroke-width="1.1" fill="none"/><text x="618.3" y="117.95" text-anchor="middle" font-size="6.2" font-weight="700" fill="#ff4383" style="letter-spacing:0">16</text><path d="M612.3 152.5H624.3M612.3 169.5H624.3M618.3 152.5V157.8M618.3 163.8V169.5" stroke="#ff4383" stroke-width="1.1" fill="none"/><text x="618.3" y="163.0" text-anchor="middle" font-size="6.2" font-weight="700" fill="#ff4383" style="letter-spacing:0">24</text><rect x="319.1" y="169.57" width="598.3" height="134.93" fill="none" stroke="#ff4383" stroke-width="1" stroke-dasharray="1.47 1.47" stroke-opacity=".9"/><path d="M612.3 304.6H624.3M612.3 327.3H624.3M618.3 304.6V313.35M618.3 319.35V327.3" stroke="#ff4383" stroke-width="1.1" fill="none"/><text x="618.3" y="318.55" text-anchor="middle" font-size="6.2" font-weight="700" fill="#ff4383" style="letter-spacing:0">32</text><path d="M612.3 357.4H624.3M612.3 368.4H624.3M618.3 357.4V359.7M618.3 365.7V368.4" stroke="#ff4383" stroke-width="1.1" fill="none"/><text x="618.3" y="364.9" text-anchor="middle" font-size="6.2" font-weight="700" fill="#ff4383" style="letter-spacing:0">16</text><rect x="319.1" y="368.5" width="598.3" height="327.1" fill="none" stroke="#ff4383" stroke-width="1" stroke-dasharray="1.47 1.47" stroke-opacity=".9"/><path d="M320 562.0H917" stroke="#d6d3d0" stroke-width="0.8" fill="none"/><path d="M320 594.0H917" stroke="#d6d3d0" stroke-width="0.8" fill="none"/><path d="M320 626.25H917" stroke="#d6d3d0" stroke-width="0.8" fill="none"/><path d="M320 658.3H917" stroke="#d6d3d0" stroke-width="0.8" fill="none"/></svg>
<footer class="ft">
<div class="t w" style="left:15px;top:12.5px;height:22px;line-height:22px;">ヘルプ</div>
<div class="t w" style="left:52.5px;top:12.5px;height:22px;line-height:22px;">お知らせ</div>
<div class="t w" style="left:100.7px;top:12.5px;height:22px;line-height:22px;">利用規約</div>
<div class="t w" style="left:149.5px;top:12.5px;height:22px;line-height:22px;">プライバシーポリシー</div>
<div class="t w" style="left:258px;top:12.5px;height:22px;line-height:22px;">特定商取引法に基づく表記</div>
<div class="t w" style="left:388px;top:12.5px;height:22px;line-height:22px;">運営会社</div>
<div class="t w" style="left:436.5px;top:12.5px;height:22px;line-height:22px;">開発者向け <span class="l">API</span></div>
<div class="t w cp" style="left:900px;top:12.3px;height:22px;line-height:22px;width:110.1px;text-align:right"><small>©</small> <span class="l">SmartHR, Inc.</span></div>
</footer>
</div></body></html>
